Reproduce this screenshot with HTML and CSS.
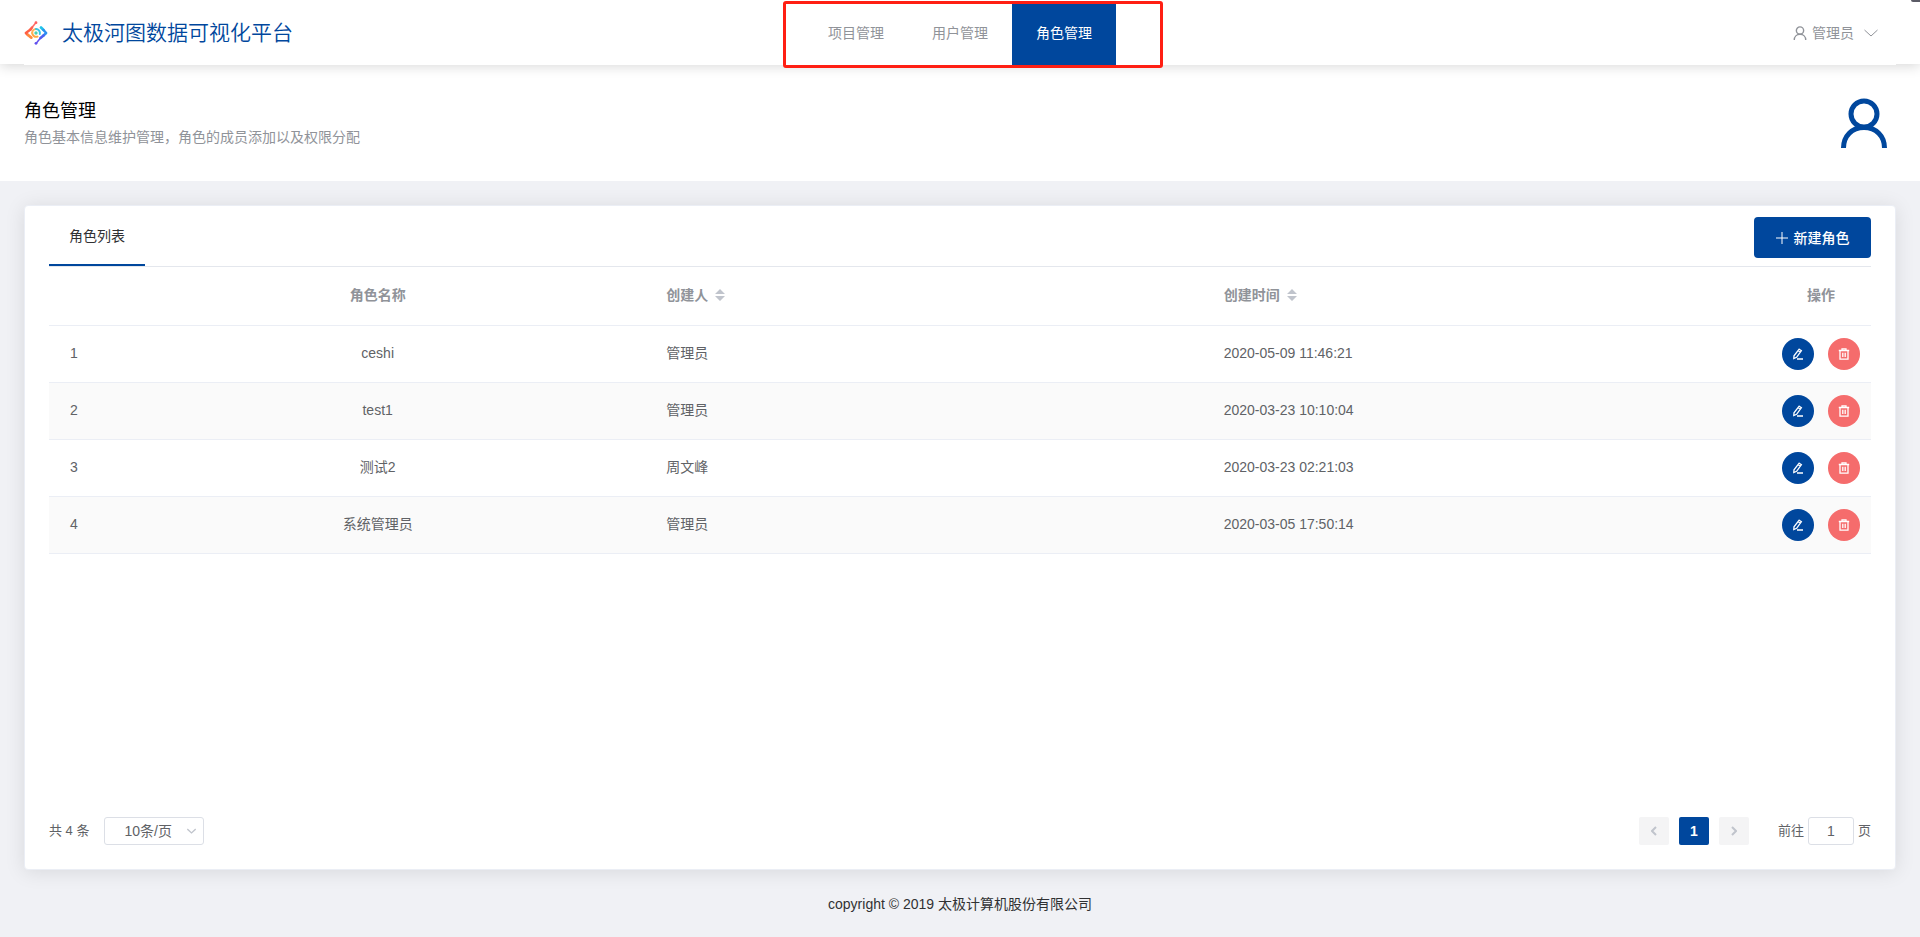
FILE: index.html
```html
<!DOCTYPE html>
<html lang="zh-CN">
<head>
<meta charset="utf-8">
<title>角色管理</title>
<link rel="stylesheet" href="styles.css">
</head>
<body>
<svg class="sprite" aria-hidden="true">
  <symbol id="user" viewBox="0 0 48 50"><circle cx="24" cy="16" r="13"/><path d="M3.500 50c0-12 8.500-20.500 20.500-20.500S44.500 38 44.500 50"/></symbol>
  <symbol id="edit" viewBox="0 0 12 12"><path d="M7.200 1.200 9.400 2.600 4.600 9.300 1.800 10.500 2 7.800zM6.200 2.800l2.100 1.500M5 11h6"/></symbol>
  <symbol id="trash" viewBox="0 0 12 12"><path d="M.8 2.500h10.400M4 2.300V.8h4v1.500M2 2.500v8.700h8V2.500M4.800 4.700v4.300M7.200 4.700v4.300"/></symbol>
  <symbol id="down" viewBox="0 0 14 8"><path d="M.5 1 7 7l6.500-6"/></symbol>
  <symbol id="sort" viewBox="0 0 10 12"><path d="M0 5 5 0l5 5zM0 7h10l-5 5z"/></symbol>
</svg>
<header class="header">
  <div class="header-inner">
    <a class="brand" href="#">
      <svg class="logo" viewBox="0 0 24 24" aria-hidden="true">
        <g fill="none" stroke-linecap="round" stroke-linejoin="round">
          <path stroke="#ff6a63" stroke-width="1.500" d="M12 1.500 8 6.500"/>
          <path stroke="#ff5f52" stroke-width="2.600" d="M8 6.500 6.500 8.500"/>
          <path stroke="#ff5f45" stroke-width="2.400" d="M6.500 8.500 1.800 12 4 14"/>
          <path stroke="#ff8a3d" stroke-width="2.800" d="M4 14 7.300 16.600"/>
          <path stroke="#ffa63f" stroke-width="2" d="M8.200 12a4 4 0 0 0 5.300 3.600"/>
          <path stroke="#ffb057" stroke-width="2" d="M8.200 12a4 4 0 0 1 3.800-4"/>
          <path stroke="#35c6e8" stroke-width="2" d="M12 8a4 4 0 0 1 3.800 5"/>
          <path stroke="#22c3ea" stroke-width="2.800" d="M17 6.600 19.500 9"/>
          <path stroke="#2c8ff0" stroke-width="2.400" d="M19.500 9 22.200 12l-2.700 2.500"/>
          <path stroke="#4c62f2" stroke-width="2.600" d="M19.500 14.500 16.500 17"/>
          <path stroke="#6150ee" stroke-width="1.500" d="M16.500 17 12 22.500"/>
        </g>
        <circle cx="12" cy="1.700" r="1.400" fill="#ff5f5f"/>
        <circle cx="12" cy="22.300" r="1.400" fill="#6150ee"/>
        <circle cx="12" cy="12" r="1.700" fill="#4fcfae" stroke="none"/>
      </svg>
      <span>太极河图数据可视化平台</span>
    </a>
    <nav class="nav">
      <a href="#">项目管理</a>
      <a href="#">用户管理</a>
      <a class="active" href="#">角色管理</a>
      <span class="nav-frame"></span>
    </nav>
    <button class="account" type="button">
      <svg class="account-icon"><use href="#user"/></svg>
      <span>管理员</span>
      <svg class="account-arrow"><use href="#down"/></svg>
    </button>
  </div>
  <span class="corner"></span>
</header>
<section class="intro">
  <div>
    <h1>角色管理</h1>
    <p>角色基本信息维护管理，角色的成员添加以及权限分配</p>
  </div>
  <svg class="intro-icon"><use href="#user"/></svg>
</section>
<main class="card">
  <div class="toolbar">
    <a class="tab" href="#">角色列表</a>
    <button class="create" type="button">
      <svg viewBox="0 0 12 12"><path d="M6 0v12M0 6h12"/></svg>
      <span>新建角色</span>
    </button>
  </div>
  <table class="roles">
    <colgroup><col class="narrow"><col><col><col><col class="actions-col"></colgroup>
    <thead>
      <tr>
        <th></th>
        <th>角色名称</th>
        <th class="left">创建人<svg class="sort"><use href="#sort"/></svg></th>
        <th class="left">创建时间<svg class="sort"><use href="#sort"/></svg></th>
        <th>操作</th>
      </tr>
    </thead>
    <tbody>
      <tr><td>1</td><td>ceshi</td><td class="left">管理员</td><td class="left">2020-05-09 11:46:21</td>
        <td class="tools"><div class="actions"><button class="round" type="button" aria-label="编辑"><svg><use href="#edit"/></svg></button><button class="round danger" type="button" aria-label="删除"><svg><use href="#trash"/></svg></button></div></td></tr>
      <tr><td>2</td><td>test1</td><td class="left">管理员</td><td class="left">2020-03-23 10:10:04</td>
        <td class="tools"><div class="actions"><button class="round" type="button" aria-label="编辑"><svg><use href="#edit"/></svg></button><button class="round danger" type="button" aria-label="删除"><svg><use href="#trash"/></svg></button></div></td></tr>
      <tr><td>3</td><td>测试2</td><td class="left">周文峰</td><td class="left">2020-03-23 02:21:03</td>
        <td class="tools"><div class="actions"><button class="round" type="button" aria-label="编辑"><svg><use href="#edit"/></svg></button><button class="round danger" type="button" aria-label="删除"><svg><use href="#trash"/></svg></button></div></td></tr>
      <tr><td>4</td><td>系统管理员</td><td class="left">管理员</td><td class="left">2020-03-05 17:50:14</td>
        <td class="tools"><div class="actions"><button class="round" type="button" aria-label="编辑"><svg><use href="#edit"/></svg></button><button class="round danger" type="button" aria-label="删除"><svg><use href="#trash"/></svg></button></div></td></tr>
    </tbody>
  </table>
  <div class="pagination">
    <span>共 4 条</span>
    <div class="size">
      <select aria-label="每页条数"><option>10条/页</option></select>
      <svg><use href="#down"/></svg>
    </div>
    <div class="pager">
      <button type="button" disabled aria-label="上一页"><svg viewBox="0 0 6 10"><path d="M5 1 1 5l4 4"/></svg></button>
      <button class="current" type="button">1</button>
      <button type="button" disabled aria-label="下一页"><svg viewBox="0 0 6 10"><path d="m1 1 4 4-4 4"/></svg></button>
    </div>
    <label class="jump">前往<input type="text" value="1">页</label>
  </div>
</main>
<footer class="footer">copyright © 2019 太极计算机股份有限公司</footer>
</body>
</html>
```
FILE: styles.css
```css
* { box-sizing: border-box; }

body {
  margin: 0;
  min-height: 100vh;
  display: flex;
  flex-direction: column;
  background: #f0f1f5;
  color: #303133;
  font: 14px/20px "Liberation Sans", "Noto Sans CJK SC", sans-serif;
}

a { color: inherit; text-decoration: none; }
button, input, select { font: inherit; color: inherit; }
button { border: 0; padding: 0; cursor: pointer; }
svg { display: block; flex: none; fill: none; stroke: currentColor; }
.sprite { position: absolute; width: 0; height: 0; }

.header {
  position: relative;
  z-index: 1;
  height: 64px;
  padding: 0 24px;
  background: #fff;
  box-shadow: 0 2px 12px rgba(0, 0, 0, 0.16);
}
.header-inner {
  height: 65px;
  display: grid;
  grid-template-columns: 1fr auto 1fr;
  align-items: center;
  background: #fff;
}
.brand {
  display: flex;
  align-items: center;
  gap: 14px;
  color: #00479d;
  font-size: 21px;
  font-weight: 350;
}
.logo { width: 24px; height: 24px; stroke: none; }
.nav {
  position: relative;
  display: flex;
  height: 100%;
  color: #909399;
}
.nav a {
  width: 104px;
  display: flex;
  align-items: center;
  justify-content: center;
}
.nav .active {
  background: #00479d;
  box-shadow: inset 0 2px #fff;
  color: #fff;
}
.nav-frame {
  position: absolute;
  inset: 1px -47px -3px -21px;
  border: 3px solid #ff1f13;
  border-radius: 3px;
  pointer-events: none;
}
.account {
  justify-self: end;
  margin-right: 18px;
  display: flex;
  align-items: center;
  background: none;
  color: #909399;
}
.account-icon { width: 14px; height: 14px; margin-right: 5px; stroke-width: 5px; }
.account-arrow { width: 14px; height: 8px; margin-left: 10px; }
.corner {
  position: absolute;
  top: 0;
  right: 0;
  width: 9px;
  height: 2px;
  background: #5b5b66;
  border-bottom-left-radius: 4px;
}

.intro {
  display: flex;
  justify-content: space-between;
  align-items: center;
  height: 117px;
  padding: 0 32px 0 24px;
  background: #fff;
}
.intro h1 { margin: 0; color: #000; font-size: 18px; line-height: 28px; font-weight: 400; }
.intro p { margin: 0; color: #909399; line-height: 24px; }
.intro-icon { width: 48px; height: 50px; color: #00479d; stroke-width: 5px; }

.card {
  flex: 1;
  display: flex;
  flex-direction: column;
  margin: 24px 24px 0;
  padding: 0 24px 24px;
  background: #fff;
  border: 1px solid #ebeef5;
  border-radius: 4px;
  box-shadow: 0 2px 20px rgba(0, 0, 0, 0.1);
}
.toolbar {
  display: flex;
  justify-content: space-between;
  height: 61px;
  border-bottom: 1px solid #e4e7ed;
}
.tab {
  padding: 20px;
  border-bottom: 2px solid #00479d;
}
.create {
  display: flex;
  align-items: center;
  justify-content: center;
  gap: 6px;
  width: 117px;
  height: 41px;
  margin-top: 11px;
  background: #00479d;
  color: #fff;
  border-radius: 4px;
  font-weight: 500;
}
.create svg { width: 12px; height: 12px; }

.roles {
  width: 100%;
  table-layout: fixed;
  border-collapse: separate;
  border-spacing: 0;
  color: #606266;
}
.narrow { width: 50px; }
.actions-col { width: 100px; }
.roles th, .roles td {
  height: 57px;
  padding: 0 10px 2px;
  border-bottom: 1px solid #ebeef5;
  text-align: center;
}
.roles th { height: 59px; color: #909399; font-weight: 700; }
.roles .left { text-align: left; }
.roles .tools { padding-bottom: 0; }
.roles tbody tr:nth-child(even) { background: #fafafa; }
.sort {
  display: inline-block;
  width: 10px;
  height: 12px;
  margin-left: 7px;
  vertical-align: -1px;
  fill: #c0c4cc;
  stroke: none;
}
.actions { display: flex; justify-content: center; gap: 14px; }
.round {
  flex: none;
  width: 32px;
  height: 32px;
  display: flex;
  align-items: center;
  justify-content: center;
  border-radius: 50%;
  background: #00479d;
  color: #fff;
}
.round svg { width: 12px; height: 12px; stroke-width: 1.3; }
.danger { background: #f56c6c; }

.pagination {
  display: flex;
  align-items: center;
  margin-top: auto;
  color: #606266;
  font-size: 13px;
}
.size { position: relative; margin-left: 15px; }
.size select {
  width: 100px;
  height: 28px;
  padding: 0 19px;
  appearance: none;
  background: #fff;
  border: 1px solid #dcdfe6;
  border-radius: 3px;
  font-size: 14px;
}
.size svg {
  position: absolute;
  top: 11px;
  right: 8px;
  width: 9px;
  height: 6px;
  color: #c0c4cc;
  stroke-width: 2px;
  pointer-events: none;
}
.pager { display: flex; gap: 10px; margin-left: auto; }
.pager button {
  display: flex;
  align-items: center;
  justify-content: center;
  width: 30px;
  height: 28px;
  border-radius: 2px;
  background: #f4f4f5;
  color: #c0c4cc;
  font-size: 14px;
  font-weight: 700;
}
.pager svg { width: 6px; height: 10px; stroke-width: 2px; }
.pager .current { background: #00479d; color: #fff; }
.jump { display: flex; align-items: center; gap: 4px; margin-left: 29px; }
.jump input {
  width: 46px;
  height: 28px;
  border: 1px solid #dcdfe6;
  border-radius: 3px;
  text-align: center;
  font-size: 14px;
}

.footer {
  padding: 24px 0 23px;
  text-align: center;
}
```
